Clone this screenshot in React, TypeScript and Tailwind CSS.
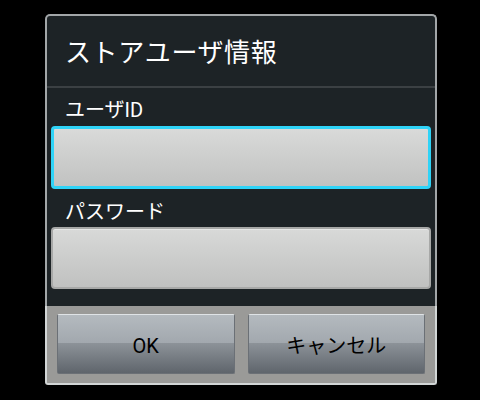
export default function App() {
  const font = { fontFamily: 'Roboto, "Noto Sans CJK JP", sans-serif' };

  return (
    <div className="w-[480px] h-[400px] bg-black pt-[14px] pl-[45px]" style={font}>
      <div className="w-[392px]">
        <div className="border-2 border-b-0 border-[#a2a6a8] rounded-t-[5px] bg-[#1d2326]">
          <div className="h-[70px] flex items-center pl-[18px] pt-[4px]">
            <h1 className="text-[26px] text-white leading-none tracking-[0.6px]">ストアユーザ情報</h1>
          </div>
          <div className="h-[2px] bg-[#3b4043]"></div>
          <div className="px-[4px] pb-[17px]">
            <div className="h-[38px] flex items-center pl-[14px] pt-[6px]">
              <span className="text-[20px] text-white leading-none">ユーザID</span>
            </div>
            <div className="h-[63px] rounded-[4px] border-[3px] border-[#2fd3f7] bg-gradient-to-b from-[#d9dad9] to-[#c1c2c1]"></div>
            <div className="h-[38px] flex items-center pl-[14px] pt-[8px]">
              <span className="text-[20px] text-white leading-none">パスワード</span>
            </div>
            <div className="h-[62px] rounded-[4px] border-2 border-[#a7a8a7] bg-gradient-to-b from-[#d8d9d8] to-[#c0c1c0] shadow-[inset_0_1px_0_#e6e7e6]"></div>
          </div>
        </div>
        <div className="h-[79px] border-2 border-t-0 border-[#d2d6d6] rounded-b-[3px] bg-[#9a9a98] flex gap-[13px] pt-[8px] px-[10px]">
          {['OK', 'キャンセル'].map((label) => (
            <button
              key={label}
              className="flex-1 h-[60px] rounded-[2px] border border-[#6b7076] border-t-[#dfe3e6] flex items-center justify-center pt-[4px] text-[20px] text-black bg-[linear-gradient(to_bottom,#b4babf_0%,#a2a8ae_48%,#8c9298_49%,#5f656c_100%)]"
            >
              {label}
            </button>
          ))}
        </div>
      </div>
    </div>
  );
}
